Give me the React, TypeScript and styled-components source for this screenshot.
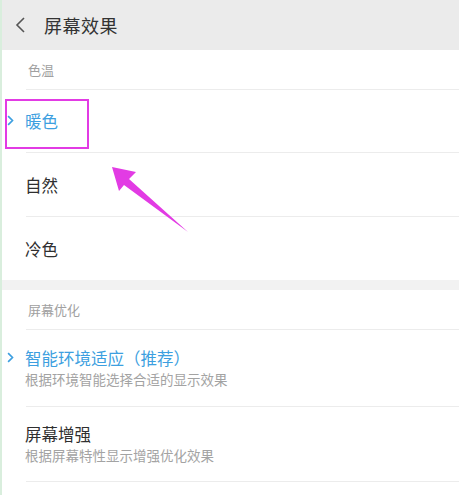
import React from "react";
import styled, { createGlobalStyle } from "styled-components";

const GlobalStyle = createGlobalStyle`
  html, body {
    margin: 0;
    padding: 0;
    background: #ffffff;
  }
  body {
    font-family: "Noto Sans CJK SC", "Noto Sans", sans-serif;
  }
`;

const Page = styled.div`
  position: relative;
  width: 459px;
  height: 495px;
  overflow: hidden;
  background: #ffffff;
  border-left: 2px solid #d9eedd;
  box-sizing: border-box;
`;

const Header = styled.div`
  display: flex;
  align-items: center;
  height: 50px;
  background: #ebebeb;
  padding-left: 12px;
  gap: 16px;
`;

const Title = styled.div`
  font-size: 18px;
  color: #333333;
  letter-spacing: 0.5px;
`;

const Section = styled.div`
  background: #ffffff;
`;

const Gap = styled.div`
  height: 10px;
  background: #f2f2f2;
`;

const SectionHeader = styled.div`
  display: flex;
  align-items: center;
  height: 39px;
  padding-left: 26px;
  font-size: 13px;
  color: #a0a0a0;
`;

const Divider = styled.div`
  height: 1px;
  margin-left: 24px;
  background: #ececec;
`;

const Row = styled.div<{ $h: number }>`
  position: relative;
  display: flex;
  flex-direction: column;
  justify-content: center;
  height: ${(p) => p.$h}px;
  padding-left: 23px;
`;

const Label = styled.div<{ $active?: boolean }>`
  position: relative;
  font-size: 16.5px;
  line-height: 22px;
  color: ${(p) => (p.$active ? "#3d9fe0" : "#2f2f2f")};
`;

const Sub = styled.div`
  font-size: 13.5px;
  line-height: 20px;
  color: #a3a3a3;
`;

const Mark = styled.span`
  position: absolute;
  left: -18px;
  top: 5px;
  display: flex;
`;

const Highlight = styled.div`
  position: absolute;
  left: 3px;
  top: 9px;
  width: 80px;
  height: 46px;
  border: 2.5px solid #e23be4;
`;

const ArrowLayer = styled.svg`
  position: absolute;
  left: 0;
  top: 0;
  pointer-events: none;
`;

const Chevron = ({ color, size }: { color: string; size: number }) => (
  <svg width={size * 0.6} height={size} viewBox="0 0 6 10">
    <path d="M1 1 L5 5 L1 9" fill="none" stroke={color} strokeWidth="1.5" />
  </svg>
);

const Back = () => (
  <svg width="14" height="20" viewBox="0 0 14 20">
    <path d="M10 3 L3 10 L10 17" fill="none" stroke="#555" strokeWidth="1.6" />
  </svg>
);

export default function App() {
  return (
    <>
      <GlobalStyle />
      <Page>
        <Header>
          <Back />
          <Title>屏幕效果</Title>
        </Header>
        <Section>
          <SectionHeader>色温</SectionHeader>
          <Divider />
          <Row $h={62}>
            <Highlight />
            <Label $active>
              <Mark>
                <Chevron color="#3d9fe0" size={11} />
              </Mark>
              暖色
            </Label>
          </Row>
          <Divider />
          <Row $h={63}>
            <Label>自然</Label>
          </Row>
          <Divider />
          <Row $h={63}>
            <Label>冷色</Label>
          </Row>
        </Section>
        <Gap />
        <Section>
          <SectionHeader>屏幕优化</SectionHeader>
          <Divider />
          <Row $h={76}>
            <Label $active>
              <Mark>
                <Chevron color="#3d9fe0" size={11} />
              </Mark>
              智能环境适应（推荐）
            </Label>
            <Sub>根据环境智能选择合适的显示效果</Sub>
          </Row>
          <Divider />
          <Row $h={74}>
            <Label>屏幕增强</Label>
            <Sub>根据屏幕特性显示增强优化效果</Sub>
          </Row>
          <Divider />
        </Section>
        <ArrowLayer width="459" height="495" viewBox="0 0 459 495">
          <polygon
            points="110,167 134,172 127,179 186,232 122,185 117,191"
            fill="#e23be4"
          />
        </ArrowLayer>
      </Page>
    </>
  );
}
